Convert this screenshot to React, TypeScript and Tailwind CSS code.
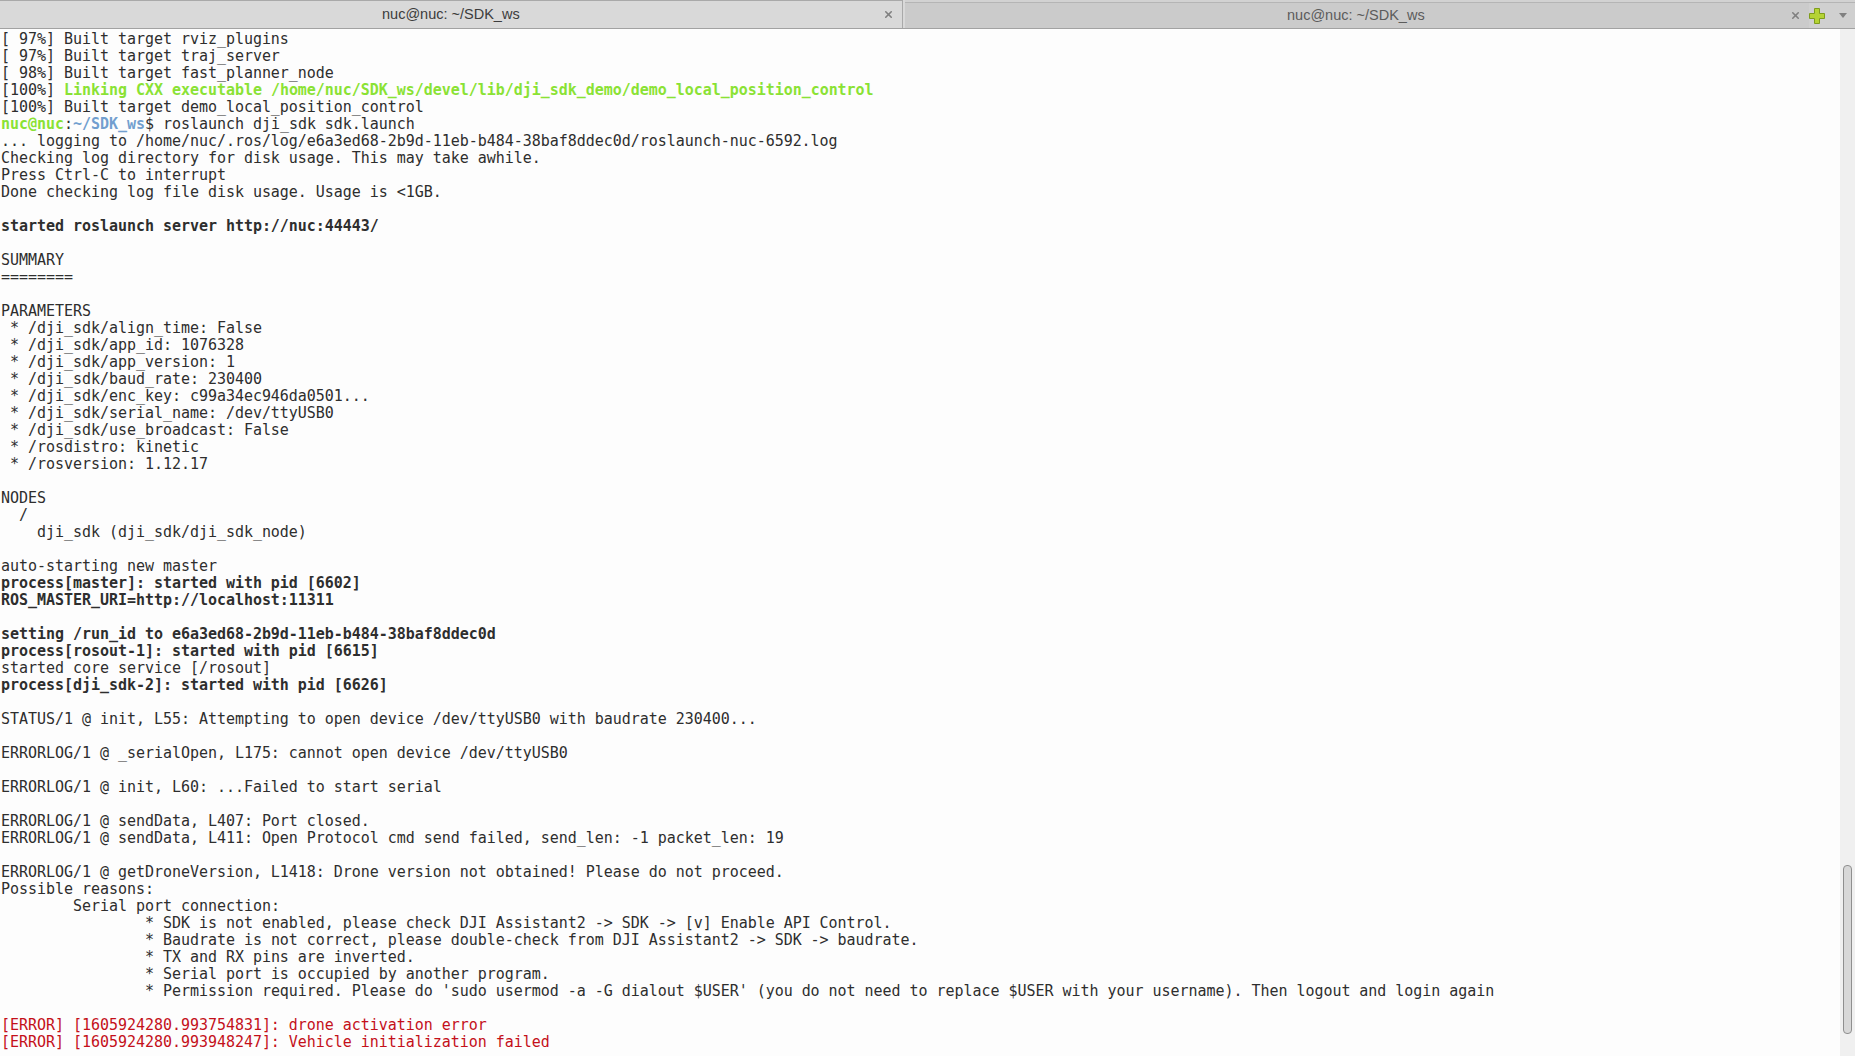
import { X } from 'lucide-react'

type Line = { t: string; k?: 'bold' | 'green' | 'red' | 'prompt' }

const LINES: Line[] = [
  { t: '[ 97%] Built target rviz_plugins' },
  { t: '[ 97%] Built target traj_server' },
  { t: '[ 98%] Built target fast_planner_node' },
  { t: '[100%] ', k: 'green' },
  { t: '[100%] Built target demo_local_position_control' },
  { t: ' roslaunch dji_sdk sdk.launch', k: 'prompt' },
  { t: '... logging to /home/nuc/.ros/log/e6a3ed68-2b9d-11eb-b484-38baf8ddec0d/roslaunch-nuc-6592.log' },
  { t: 'Checking log directory for disk usage. This may take awhile.' },
  { t: 'Press Ctrl-C to interrupt' },
  { t: 'Done checking log file disk usage. Usage is <1GB.' },
  { t: '' },
  { t: 'started roslaunch server http://nuc:44443/', k: 'bold' },
  { t: '' },
  { t: 'SUMMARY' },
  { t: '========' },
  { t: '' },
  { t: 'PARAMETERS' },
  { t: ' * /dji_sdk/align_time: False' },
  { t: ' * /dji_sdk/app_id: 1076328' },
  { t: ' * /dji_sdk/app_version: 1' },
  { t: ' * /dji_sdk/baud_rate: 230400' },
  { t: ' * /dji_sdk/enc_key: c99a34ec946da0501...' },
  { t: ' * /dji_sdk/serial_name: /dev/ttyUSB0' },
  { t: ' * /dji_sdk/use_broadcast: False' },
  { t: ' * /rosdistro: kinetic' },
  { t: ' * /rosversion: 1.12.17' },
  { t: '' },
  { t: 'NODES' },
  { t: '  /' },
  { t: '    dji_sdk (dji_sdk/dji_sdk_node)' },
  { t: '' },
  { t: 'auto-starting new master' },
  { t: 'process[master]: started with pid [6602]', k: 'bold' },
  { t: 'ROS_MASTER_URI=http://localhost:11311', k: 'bold' },
  { t: '' },
  { t: 'setting /run_id to e6a3ed68-2b9d-11eb-b484-38baf8ddec0d', k: 'bold' },
  { t: 'process[rosout-1]: started with pid [6615]', k: 'bold' },
  { t: 'started core service [/rosout]' },
  { t: 'process[dji_sdk-2]: started with pid [6626]', k: 'bold' },
  { t: '' },
  { t: 'STATUS/1 @ init, L55: Attempting to open device /dev/ttyUSB0 with baudrate 230400...' },
  { t: '' },
  { t: 'ERRORLOG/1 @ _serialOpen, L175: cannot open device /dev/ttyUSB0' },
  { t: '' },
  { t: 'ERRORLOG/1 @ init, L60: ...Failed to start serial' },
  { t: '' },
  { t: 'ERRORLOG/1 @ sendData, L407: Port closed.' },
  { t: 'ERRORLOG/1 @ sendData, L411: Open Protocol cmd send failed, send_len: -1 packet_len: 19' },
  { t: '' },
  { t: 'ERRORLOG/1 @ getDroneVersion, L1418: Drone version not obtained! Please do not proceed.' },
  { t: 'Possible reasons:' },
  { t: '\tSerial port connection:' },
  { t: '\t\t* SDK is not enabled, please check DJI Assistant2 -> SDK -> [v] Enable API Control.' },
  { t: '\t\t* Baudrate is not correct, please double-check from DJI Assistant2 -> SDK -> baudrate.' },
  { t: '\t\t* TX and RX pins are inverted.' },
  { t: '\t\t* Serial port is occupied by another program.' },
  { t: "\t\t* Permission required. Please do 'sudo usermod -a -G dialout $USER' (you do not need to replace $USER with your username). Then logout and login again" },
  { t: '' },
  { t: '[ERROR] [1605924280.993754831]: drone activation error', k: 'red' },
  { t: '[ERROR] [1605924280.993948247]: Vehicle initialization failed', k: 'red' },
]

function TermLine({ line }: { line: Line }) {
  if (line.k === 'green') {
    return (
      <div className="h-[17px]">
        {line.t}
        <span className="font-bold text-[#8ae234]">Linking CXX executable /home/nuc/SDK_ws/devel/lib/dji_sdk_demo/demo_local_position_control</span>
      </div>
    )
  }
  if (line.k === 'prompt') {
    return (
      <div className="h-[17px]">
        <span className="font-bold text-[#8ae234]">nuc@nuc</span>
        :<span className="font-bold text-[#729fcf]">~/SDK_ws</span>${line.t}
      </div>
    )
  }
  const color = line.k === 'red' ? 'text-[#c4101a]' : ''
  const weight = line.k === 'bold' ? 'font-bold' : ''
  return <div className={`h-[17px] ${color} ${weight}`}>{line.t}</div>
}

function PlusIcon() {
  return (
    <svg width="16" height="16" viewBox="0 0 16 16">
      <path d="M5.5 .5h5v5h5v5h-5v5h-5v-5h-5v-5h5z" fill="#b5d334" stroke="#7f9c1c" strokeLinejoin="round" />
    </svg>
  )
}

export default function App() {
  return (
    <div className="h-[1056px] w-[1855px] overflow-hidden bg-[#fdfdfd] flex flex-col">
      <div className="h-[29px] flex shrink-0 bg-[#d2d2d2] border-b border-[#a2a2a2] text-[14.5px] font-['Liberation_Sans',sans-serif]">
        <div className="w-[903px] flex items-center bg-[#d9d9d9] border-t border-[#a9a9a9] border-r border-r-[#a9a9a9] pl-[382px] pr-[8px] text-[#3c3c3c]">
          <span className="flex-1">nuc@nuc: ~/SDK_ws</span>
          <X size={11} strokeWidth={3.5} className="text-[#808080]" />
        </div>
        <div className="w-[2px] bg-[#d9d9d9]" />
        <div className="flex-1 flex items-center bg-[#cbcbcb] mt-[2px] border-t border-[#b5b5b5] pl-[382px] text-[#5c5c5c]">
          <span className="flex-1">nuc@nuc: ~/SDK_ws</span>
          <X size={11} strokeWidth={3.5} className="text-[#808080] mr-[8px]" />
          <div className="w-[46px] h-full flex items-center gap-[14px] bg-[#d0d0d0]">
            <PlusIcon />
            <span className="w-0 h-0 border-l-[4px] border-r-[4px] border-t-[5px] border-l-transparent border-r-transparent border-t-[#808080]" />
          </div>
        </div>
      </div>
      <div className="flex-1 flex min-h-0">
        <pre className="flex-1 min-w-0 overflow-hidden pl-[1px] pt-[2px] font-['DejaVu_Sans_Mono',monospace] text-[15px] leading-[17px] tracking-[-0.035px] [tab-size:8] text-[#2e2e2e]">
          {LINES.map((line, i) => (
            <TermLine key={i} line={line} />
          ))}
        </pre>
        <div className="w-[15px] bg-[#f0f0f0] pt-[836px] pl-[3px]">
          <div className="w-[9px] h-[169px] rounded-[4px] bg-[#d8d8d8] border border-[#8f8f8f]" />
        </div>
      </div>
    </div>
  )
}
